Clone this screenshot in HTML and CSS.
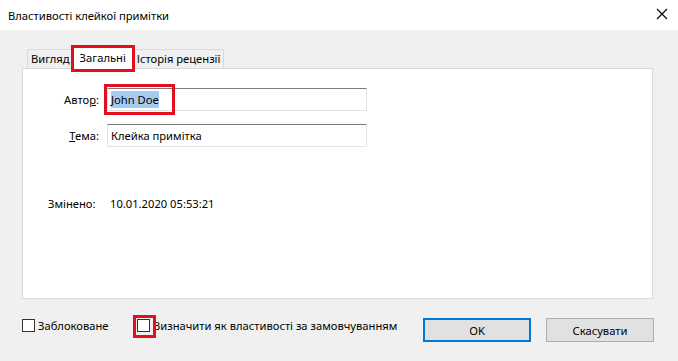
FILE: index.html
```html
<!DOCTYPE html>
<html lang="uk">
<head>
<meta charset="utf-8">
<title>Властивості клейкої примітки</title>
<link rel="stylesheet" href="styles.css">
</head>
<body>
<div class="window">
  <div class="titlebar">
    <span class="title">Властивості клейкої примітки</span>
    <svg class="close" width="12" height="12" viewBox="0 0 12 12"><path d="M1 1 L11 11 M11 1 L1 11" stroke="#000" stroke-width="1.1" fill="none"/></svg>
  </div>
  <div class="content">
    <div class="tabs">
      <div class="tab">Вигляд</div>
      <div class="tab selected">Загальні<span class="mark mark-tab"></span></div>
      <div class="tab">Історія рецензії</div>
    </div>
    <div class="panel">
      <div class="field">
        <label class="label">Авто<u>р</u>:</label>
        <div class="input"><span class="sel">John Doe</span><span class="mark mark-author"></span></div>
      </div>
      <div class="field">
        <label class="label"><u>Т</u>ема:</label>
        <div class="input">Клейка примітка</div>
      </div>
      <div class="modified">
        <span class="mod-label">Змінено:</span>
        <span class="mod-value">10.01.2020 05:53:21</span>
      </div>
    </div>
    <div class="footer">
      <div class="check first"><span class="box"></span>Заблоковане</div>
      <div class="check second"><span class="box"><span class="mark mark-check"></span></span>Визначити як властивості за замовчуванням</div>
      <div class="buttons">
        <div class="btn default">OK</div>
        <div class="btn">Скасувати</div>
      </div>
    </div>
  </div>
</div>
</body>
</html>
```
FILE: styles.css
```css
* { box-sizing: border-box; }
html, body { margin: 0; padding: 0; }
body {
  width: 678px;
  height: 361px;
  background: #f0f0f0;
  font-family: "Noto Sans", "Open Sans", sans-serif;
  font-size: 11.2px;
  color: #000;
  overflow: hidden;
}
.window { width: 678px; height: 361px; }
.titlebar {
  height: 30px;
  background: #fff;
  display: flex;
  align-items: center;
  justify-content: space-between;
  padding: 0 10px 0 8px;
}
.close { margin-top: -2px; }
.content { padding: 16px 25px 0 22px; }
.tabs {
  display: flex;
  align-items: flex-end;
  height: 22px;
  padding-left: 6px;
  position: relative;
  z-index: 1;
}
.tab {
  height: 19px;
  padding: 0 3px;
  border: 1px solid #d9d9d9;
  border-bottom: none;
  background: #f0f0f0;
  display: flex;
  align-items: center;
  line-height: 1;
  margin-left: -1px;
  white-space: nowrap;
}
.tab.selected {
  height: 23px;
  margin-bottom: -1px;
  background: #fff;
  padding: 0 7px 0 6px;
  align-items: flex-start;
  padding-top: 5px;
  position: relative;
}
.mark {
  position: absolute;
  border: 3px solid #e0101e;
  pointer-events: none;
}
.mark-tab { left: -3px; top: -2px; right: -2px; bottom: -3px; }
.panel {
  height: 231px;
  width: 631px;
  background: #fff;
  border: 1px solid #d9d9d9;
  padding-top: 19px;
}
.field {
  display: flex;
  align-items: center;
  margin-bottom: 13px;
}
.label {
  width: 76px;
  text-align: right;
  margin-right: 8px;
}
.input {
  position: relative;
  width: 260px;
  height: 23px;
  border: 1px solid #e3e3e3;
  border-top: 1px solid #7a7a7a;
  display: flex;
  align-items: center;
  padding-left: 3px;
  background: #fff;
}
.sel { background: #a6cbf0; padding: 1px 0; }
.mark-author { left: -4px; top: -5px; width: 71px; height: 31px; }
.modified {
  margin-top: 49px;
  padding-left: 25px;
  display: flex;
}
.mod-label { width: 62px; }
.footer {
  display: flex;
  align-items: flex-start;
  padding-top: 19px;
}
.check {
  display: flex;
  align-items: center;
  height: 14px;
  white-space: nowrap;
  flex: none;
}
.check.first { width: 115px; }
.box {
  position: relative;
  width: 13px;
  height: 13px;
  border: 1px solid #333;
  background: #fff;
  margin-right: 3px;
  flex: none;
}
.mark-check { left: -5px; top: -5px; width: 23px; height: 23px; }
.buttons {
  display: flex;
  margin-left: auto;
  gap: 15px;
  margin-right: -1px;
}
.btn {
  width: 108px;
  height: 24px;
  border: 1px solid #adadad;
  background: #e1e1e1;
  display: flex;
  align-items: center;
  justify-content: center;
}
.btn.default { border: 2px solid #0078d7; }
```
